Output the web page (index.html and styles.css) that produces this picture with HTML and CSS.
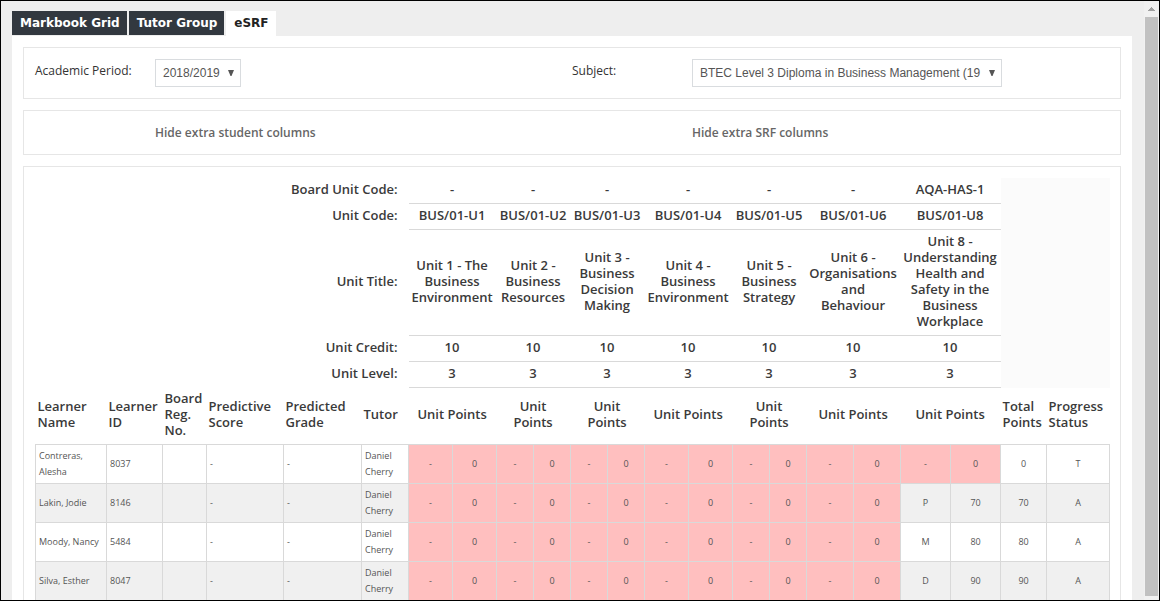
FILE: index.html
```html
<!DOCTYPE html>
<html lang="en">
<head>
<meta charset="utf-8">
<title>eSRF</title>
<link rel="stylesheet" href="styles.css">
</head>
<body>
<div class="frame">
  <div class="page">
    <nav class="tabs">
      <a class="tab" href="#">Markbook Grid</a>
      <a class="tab" href="#">Tutor Group</a>
      <a class="tab tab-active" href="#" aria-current="page">eSRF</a>
    </nav>
    <main class="content">
      <form class="card pair">
        <div class="field">
          <label class="field-label" for="period">Academic Period:</label>
          <div class="picker">
            <select id="period" class="picker-select"><option>2018/2019</option></select>
            <svg class="picker-arrow" viewBox="0 0 6 6" aria-hidden="true"><path d="M0 0h6L3.5 6h-1z"/></svg>
          </div>
        </div>
        <div class="field">
          <label class="field-label" for="subject">Subject:</label>
          <div class="picker picker-wide">
            <select id="subject" class="picker-select"><option>BTEC Level 3 Diploma in Business Management (19</option></select>
            <svg class="picker-arrow" viewBox="0 0 6 6" aria-hidden="true"><path d="M0 0h6L3.5 6h-1z"/></svg>
          </div>
        </div>
      </form>
      <div class="card pair toggles">
        <a class="toggle" href="#">Hide extra student columns</a>
        <a class="toggle" href="#">Hide extra SRF columns</a>
      </div>
      <section class="card">
        <table class="grid">
          <colgroup>
            <col class="c-name"><col class="c-id"><col class="c-reg"><col class="c-score"><col class="c-grade"><col class="c-tutor">
            <col class="c-mid" span="2"><col class="c-small" span="4"><col class="c-mid" span="2"><col class="c-small" span="2">
            <col class="c-tutor" span="2"><col class="c-large" span="2"><col class="c-total"><col class="c-status">
          </colgroup>
          <thead>
            <tr class="unit-row">
              <th class="row-label" colspan="6" scope="row">Board Unit Code:</th>
              <td colspan="2">-</td><td colspan="2">-</td><td colspan="2">-</td><td colspan="2">-</td><td colspan="2">-</td><td colspan="2">-</td><td colspan="2">AQA-HAS-1</td>
              <td class="blank" colspan="2" rowspan="5"></td>
            </tr>
            <tr class="unit-row">
              <th class="row-label" colspan="6" scope="row">Unit Code:</th>
              <td colspan="2">BUS/01-U1</td><td colspan="2">BUS/01-U2</td><td colspan="2">BUS/01-U3</td><td colspan="2">BUS/01-U4</td><td colspan="2">BUS/01-U5</td><td colspan="2">BUS/01-U6</td><td colspan="2">BUS/01-U8</td>
            </tr>
            <tr class="unit-row">
              <th class="row-label" colspan="6" scope="row">Unit Title:</th>
              <td colspan="2">Unit 1 - The Business Environment</td><td colspan="2">Unit 2 - Business Resources</td><td colspan="2">Unit 3 - Business Decision Making</td><td colspan="2">Unit 4 - Business Environment</td><td colspan="2">Unit 5 - Business Strategy</td><td colspan="2">Unit 6 - Organisations and Behaviour</td><td colspan="2">Unit 8 - Understanding Health and Safety in the Business Workplace</td>
            </tr>
            <tr class="unit-row">
              <th class="row-label" colspan="6" scope="row">Unit Credit:</th>
              <td colspan="2">10</td><td colspan="2">10</td><td colspan="2">10</td><td colspan="2">10</td><td colspan="2">10</td><td colspan="2">10</td><td colspan="2">10</td>
            </tr>
            <tr class="unit-row">
              <th class="row-label" colspan="6" scope="row">Unit Level:</th>
              <td colspan="2">3</td><td colspan="2">3</td><td colspan="2">3</td><td colspan="2">3</td><td colspan="2">3</td><td colspan="2">3</td><td colspan="2">3</td>
            </tr>
            <tr class="head-row">
              <th scope="col">Learner Name</th><th scope="col">Learner ID</th><th scope="col">Board Reg. No.</th><th scope="col">Predictive Score</th><th scope="col">Predicted Grade</th><th scope="col">Tutor</th>
              <th class="points points-wide" colspan="2">Unit Points</th><th class="points" colspan="2">Unit Points</th><th class="points" colspan="2">Unit Points</th><th class="points points-wide" colspan="2">Unit Points</th><th class="points" colspan="2">Unit Points</th><th class="points points-wide" colspan="2">Unit Points</th><th class="points points-wide" colspan="2">Unit Points</th>
              <th scope="col">Total Points</th><th scope="col">Progress Status</th>
            </tr>
          </thead>
          <tbody>
            <tr>
              <td>Contreras, Alesha</td><td>8037</td><td></td><td>-</td><td>-</td><td>Daniel Cherry</td>
              <td class="num miss">-</td><td class="num miss">0</td><td class="num miss">-</td><td class="num miss">0</td><td class="num miss">-</td><td class="num miss">0</td><td class="num miss">-</td><td class="num miss">0</td><td class="num miss">-</td><td class="num miss">0</td><td class="num miss">-</td><td class="num miss">0</td>
              <td class="num miss">-</td><td class="num miss">0</td><td class="num">0</td><td class="num">T</td>
            </tr>
            <tr>
              <td>Lakin, Jodie</td><td>8146</td><td></td><td>-</td><td>-</td><td>Daniel Cherry</td>
              <td class="num miss">-</td><td class="num miss">0</td><td class="num miss">-</td><td class="num miss">0</td><td class="num miss">-</td><td class="num miss">0</td><td class="num miss">-</td><td class="num miss">0</td><td class="num miss">-</td><td class="num miss">0</td><td class="num miss">-</td><td class="num miss">0</td>
              <td class="num">P</td><td class="num">70</td><td class="num">70</td><td class="num">A</td>
            </tr>
            <tr>
              <td>Moody, Nancy</td><td>5484</td><td></td><td>-</td><td>-</td><td>Daniel Cherry</td>
              <td class="num miss">-</td><td class="num miss">0</td><td class="num miss">-</td><td class="num miss">0</td><td class="num miss">-</td><td class="num miss">0</td><td class="num miss">-</td><td class="num miss">0</td><td class="num miss">-</td><td class="num miss">0</td><td class="num miss">-</td><td class="num miss">0</td>
              <td class="num">M</td><td class="num">80</td><td class="num">80</td><td class="num">A</td>
            </tr>
            <tr>
              <td>Silva, Esther</td><td>8047</td><td></td><td>-</td><td>-</td><td>Daniel Cherry</td>
              <td class="num miss">-</td><td class="num miss">0</td><td class="num miss">-</td><td class="num miss">0</td><td class="num miss">-</td><td class="num miss">0</td><td class="num miss">-</td><td class="num miss">0</td><td class="num miss">-</td><td class="num miss">0</td><td class="num miss">-</td><td class="num miss">0</td>
              <td class="num">D</td><td class="num">90</td><td class="num">90</td><td class="num">A</td>
            </tr>
          </tbody>
        </table>
      </section>
    </main>
  </div>
  <div class="scrollbar" aria-hidden="true">
    <svg class="scroll-up" viewBox="0 0 7 4"><path d="M3 0h1v1h1v1h1v1h1v1H0V3h1V2h1V1h1z"/></svg>
    <div class="scroll-thumb"></div>
  </div>
</div>
</body>
</html>
```

FILE: styles.css
```css
* {
  box-sizing: border-box;
}

body {
  margin: 0;
  font-family: "Open Sans", "Noto Sans", sans-serif;
  font-size: 12px;
  line-height: 16px;
  color: #333;
}

.frame {
  display: flex;
  height: 100vh;
  overflow: hidden;
  border: 1px solid #000;
  background: #eee;
}

.page {
  flex: 1;
  min-width: 0;
  padding: 10px 12px 0 11px;
}

.tabs {
  display: flex;
  align-items: flex-start;
  gap: 2px;
}

.tab {
  padding: 4px 7px 4px 8px;
  background: #32383f;
  color: #fff;
  font-family: Verdana, "DejaVu Sans", sans-serif;
  font-size: 12px;
  font-weight: 700;
  line-height: 16px;
  text-decoration: none;
}

.tab-active {
  padding-bottom: 5px;
  background: #fff;
  color: #222;
}

.content {
  display: flex;
  flex-direction: column;
  gap: 11px;
  padding: 11px;
  background: #fff;
}

.card {
  padding: 11px;
  border: 1px solid #e6e6e6;
}

.pair {
  display: grid;
  grid-template-columns: 1fr 1fr;
}

.field {
  display: grid;
  grid-template-columns: 120px 1fr;
}

.field-label {
  padding-top: 4px;
}

.picker {
  position: relative;
  width: 86px;
}

.picker-wide {
  width: 310px;
}

.picker-select {
  appearance: none;
  display: block;
  width: 100%;
  height: 28px;
  padding: 0 18px 0 7px;
  border: 1px solid #d9dcdf;
  border-radius: 0;
  background: #fff;
  color: #555;
  font: 12px "Liberation Sans", Arial, sans-serif;
  text-overflow: clip;
}

.picker-arrow {
  position: absolute;
  top: 11px;
  right: 7px;
  width: 6px;
  height: 6px;
  fill: #555;
  pointer-events: none;
}

.toggles {
  padding: 14px 11px 13px;
}

.toggle {
  padding-left: 120px;
  color: #666;
  font-weight: 600;
  text-decoration: none;
}

.grid {
  width: 100%;
  table-layout: fixed;
  border-collapse: collapse;
  color: #555;
  font-size: 9px;
}

.c-name { width: 71px; }
.c-id { width: 56px; }
.c-reg { width: 44px; }
.c-score { width: 77px; }
.c-grade { width: 78px; }
.c-tutor { width: 47px; }
.c-mid { width: 44px; }
.c-small { width: 37px; }
.c-large { width: 50px; }
.c-total { width: 46px; }
.c-status { width: 63px; }

.grid thead {
  color: #3a3a3a;
  font-size: 13px;
}

.unit-row td {
  padding: 3px 3px 6px 2px;
  border-bottom: 1px solid #d9d9d9;
  font-weight: 600;
  text-align: center;
}

.unit-row .row-label {
  padding: 2px 11px 6px 0;
  font-weight: 600;
  text-align: right;
}

.unit-row .blank {
  border-bottom: 0;
  background: #fbfbfb;
}

.head-row th {
  height: 56px;
  padding: 2px 0 6px 2px;
  font-weight: 600;
  text-align: left;
}

.head-row .points {
  padding: 2px 13px 6px 12px;
  text-align: center;
}

.head-row .points-wide {
  padding: 2px 5px 6px 4px;
}

.grid tbody td {
  height: 39px;
  padding: 3px;
  border: 1px solid #d9d9d9;
}

.grid tbody tr:nth-child(even) {
  background: #f0f0f0;
}

.grid tbody .num {
  text-align: center;
}

.grid tbody .miss {
  background: #ffbfbf;
}

.scrollbar {
  display: flex;
  flex-direction: column;
  width: 15px;
  padding: 6px 1px 4px;
  background: #f1f1f1;
}

.scroll-up {
  align-self: center;
  width: 7px;
  height: 4px;
  margin-bottom: 6px;
  fill: #a0a0a0;
}

.scroll-thumb {
  flex: 1;
  background: #c1c1c1;
}
```
